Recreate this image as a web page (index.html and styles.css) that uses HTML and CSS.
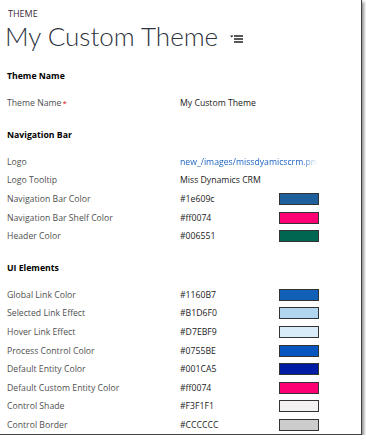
FILE: index.html
```html
<!DOCTYPE html>
<html lang="en">

<head>
	<meta charset="UTF-8">
	<title>Theme</title>
	<link rel="stylesheet" href="styles.css">
</head>

<body>
	<div class="frame">
		<div class="crumb">THEME</div>
		<h1 class="title">My Custom Theme
			<svg class="title-menu" width="13" height="10" viewBox="0 0 13 10">
				<path d="M0 1.5h3.5L1.75 3.5z" fill="#222" />
				<path d="M4 2h9M4 5h9M4 8h9" stroke="#222" stroke-width="1.4" />
			</svg>
		</h1>

		<div class="section first">
			<div class="section-title">Theme Name</div>
			<div class="row">
				<div class="label">Theme Name<span class="req">*</span></div>
				<div class="value">My Custom Theme</div>
			</div>
		</div>

		<div class="section">
			<div class="section-title">Navigation Bar</div>
			<div class="row">
				<div class="label">Logo</div>
				<div class="value link">new_/images/missdyamicscrm.png</div>
			</div>
			<div class="row">
				<div class="label">Logo Tooltip</div>
				<div class="value">Miss Dynamics CRM</div>
			</div>
			<div class="row">
				<div class="label">Navigation Bar Color</div>
				<div class="value">#1e609c</div>
				<div class="swatch" style="background: #1e609c"></div>
			</div>
			<div class="row">
				<div class="label">Navigation Bar Shelf Color</div>
				<div class="value">#ff0074</div>
				<div class="swatch" style="background: #ff0074"></div>
			</div>
			<div class="row">
				<div class="label">Header Color</div>
				<div class="value">#006551</div>
				<div class="swatch" style="background: #006551"></div>
			</div>
		</div>

		<div class="section">
			<div class="section-title">UI Elements</div>
			<div class="row">
				<div class="label">Global Link Color</div>
				<div class="value">#1160B7</div>
				<div class="swatch" style="background: #1160B7"></div>
			</div>
			<div class="row">
				<div class="label">Selected Link Effect</div>
				<div class="value">#B1D6F0</div>
				<div class="swatch" style="background: #B1D6F0"></div>
			</div>
			<div class="row">
				<div class="label">Hover Link Effect</div>
				<div class="value">#D7EBF9</div>
				<div class="swatch" style="background: #D7EBF9"></div>
			</div>
			<div class="row">
				<div class="label">Process Control Color</div>
				<div class="value">#0755BE</div>
				<div class="swatch" style="background: #0755BE"></div>
			</div>
			<div class="row">
				<div class="label">Default Entity Color</div>
				<div class="value">#001CA5</div>
				<div class="swatch" style="background: #001CA5"></div>
			</div>
			<div class="row">
				<div class="label">Default Custom Entity Color</div>
				<div class="value">#ff0074</div>
				<div class="swatch" style="background: #ff0074"></div>
			</div>
			<div class="row">
				<div class="label">Control Shade</div>
				<div class="value">#F3F1F1</div>
				<div class="swatch" style="background: #F3F1F1"></div>
			</div>
			<div class="row">
				<div class="label">Control Border</div>
				<div class="value">#CCCCCC</div>
				<div class="swatch" style="background: #CCCCCC"></div>
			</div>
		</div>
	</div>
</body>

</html>
```

FILE: styles.css
```css
body {
	margin: 0;
	background-color: #fff;
	font-family: "Open Sans", "Noto Sans", sans-serif;
	color: #444;
}

.frame {
	width: 361px;
	height: 434px;
	border-right: 1px solid #444;
	border-bottom: 1px solid #444;
	box-shadow: 2px 2px 3px rgba(0, 0, 0, 0.45);
	background-color: #fff;
	overflow: hidden;
}

.crumb {
	font-size: 9px;
	line-height: 11px;
	color: #3a2a3a;
	padding: 8px 0 0 8px;
}

.title {
	margin: 2px 0 0;
	padding-left: 5px;
	font-family: Lato, "Open Sans", sans-serif;
	font-weight: 300;
	font-size: 26px;
	line-height: 30px;
	color: #2e3440;
	display: flex;
	align-items: center;
}

.title-menu {
	margin: 6px 0 0 12px;
}

.section {
	padding-top: 15px;
}

.section.first {
	padding-top: 18px;
}

.section-title {
	font-size: 8.7px;
	font-weight: 700;
	color: #000;
	line-height: 14px;
	padding-left: 7px;
	margin-bottom: 11px;
}

.row {
	display: grid;
	grid-template-columns: 180px 99px 40px;
	align-items: center;
	height: 18.6px;
	font-size: 8.7px;
}

.label {
	padding-left: 7px;
	color: #505050;
	white-space: nowrap;
}

.req {
	color: #e01010;
	font-size: 8px;
	vertical-align: top;
	margin-left: 1px;
}

.value {
	color: #222;
	white-space: nowrap;
}

.link {
	color: #1a62c0;
	width: 138px;
	overflow: hidden;
	-webkit-mask-image: linear-gradient(to right, #000 88%, transparent);
	mask-image: linear-gradient(to right, #000 88%, transparent);
}

.swatch {
	height: 10px;
	border: 1px solid #333;
}
```
